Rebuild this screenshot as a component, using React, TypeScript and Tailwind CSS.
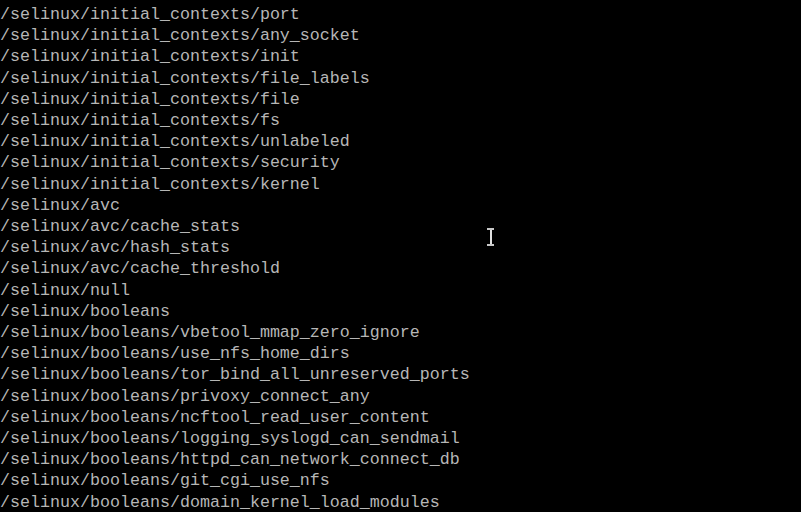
const lines = [
  '/selinux/initial_contexts/port',
  '/selinux/initial_contexts/any_socket',
  '/selinux/initial_contexts/init',
  '/selinux/initial_contexts/file_labels',
  '/selinux/initial_contexts/file',
  '/selinux/initial_contexts/fs',
  '/selinux/initial_contexts/unlabeled',
  '/selinux/initial_contexts/security',
  '/selinux/initial_contexts/kernel',
  '/selinux/avc',
  '/selinux/avc/cache_stats',
  '/selinux/avc/hash_stats',
  '/selinux/avc/cache_threshold',
  '/selinux/null',
  '/selinux/booleans',
  '/selinux/booleans/vbetool_mmap_zero_ignore',
  '/selinux/booleans/use_nfs_home_dirs',
  '/selinux/booleans/tor_bind_all_unreserved_ports',
  '/selinux/booleans/privoxy_connect_any',
  '/selinux/booleans/ncftool_read_user_content',
  '/selinux/booleans/logging_syslogd_can_sendmail',
  '/selinux/booleans/httpd_can_network_connect_db',
  '/selinux/booleans/git_cgi_use_nfs',
  '/selinux/booleans/domain_kernel_load_modules',
];

export default function App() {
  return (
    <div className="relative w-[801px] h-[512px] overflow-hidden bg-black pt-[4px]">
      <pre className="m-0 font-['Liberation_Mono',monospace] text-[16.67px] leading-[21.2px] text-[#b6b6b6]">
        {lines.map((l) => (
          <div key={l}>{l}</div>
        ))}
      </pre>

      {/* mouse I-beam cursor */}
      <div className="absolute left-[487px] top-[228px] w-[7px] h-[18px] flex flex-col items-center justify-between">
        <div className="w-[7px] h-[2px] bg-[#c8c8c8]" />
        <div className="w-[2px] flex-1 bg-[#e0e0e0]" />
        <div className="w-[7px] h-[2px] bg-[#c8c8c8]" />
      </div>
    </div>
  );
}
